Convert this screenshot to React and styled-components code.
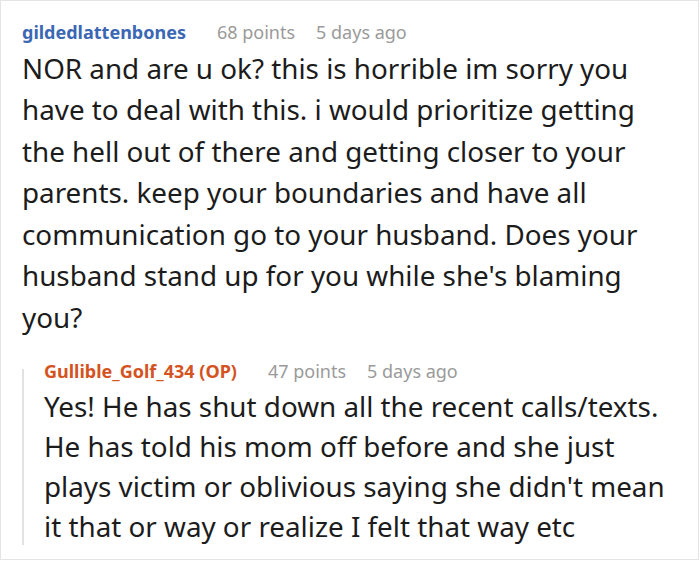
import React from 'react';
import styled, { createGlobalStyle } from 'styled-components';

const GlobalStyle = createGlobalStyle`
	html, body {
		margin: 0;
		padding: 0;
		background: #fff;
	}
`;

//Outer frame around the thread
const Card = styled.div`
	box-sizing: border-box;
	width: 699px;
	height: 560px;
	border: 1.5px solid #e4e4e4;
	border-top-width: 1px;
	padding: 17px 32px 0 21px;
	overflow: hidden;
	font-family: 'Noto Sans', 'Open Sans', sans-serif;
	background: #fff;
`;

const Comment = styled.div`
	display: flex;
	flex-direction: column;
`;

const Meta = styled.div`
	display: flex;
	align-items: baseline;
	font-size: 18px;
	line-height: 28px;
	white-space: nowrap;
`;

const Author = styled.span`
	font-weight: 700;
	color: ${(p) => (p.$op ? '#d4531f' : '#3b67b4')};
	margin-right: 31px;
`;

const Points = styled.span`
	color: #9a9a9a;
	margin-right: 21px;
`;

const When = styled.span`
	color: #9a9a9a;
`;

const Body = styled.p`
	margin: ${(p) => p.$m || '0'};
	font-size: 27.8px;
	line-height: ${(p) => p.$lh || '41.5px'};
	color: #1c1c1c;
`;

//Nested reply, thread line starts halfway down the header
const Reply = styled.div`
	position: relative;
	margin-top: 19px;
	padding-left: 22px;
	display: flex;
	flex-direction: column;

	&::before {
		content: '';
		position: absolute;
		left: 0;
		top: 12px;
		height: 176px;
		width: 2px;
		background: #e2e2e2;
	}
`;

const App = () => {
	return (
		<>
			<GlobalStyle />
			<Card>
				<Comment>
					<Meta>
						<Author>gildedlattenbones</Author>
						<Points>68 points</Points>
						<When>5 days ago</When>
					</Meta>
					<Body $m="1.5px 0 0">
						NOR and are u ok? this is horrible im sorry you have to deal with this. i would prioritize getting the hell out of there and getting closer to your parents. keep your boundaries and have all communication go to your husband. Does your husband stand up for you while she's blaming you?
					</Body>
				</Comment>
				<Reply>
					<Meta>
						<Author $op>Gullible_Golf_434 (OP)</Author>
						<Points>47 points</Points>
						<When>5 days ago</When>
					</Meta>
					<Body $m="1px 0 0" $lh="40px">
						Yes! He has shut down all the recent calls/texts. He has told his mom off before and she just plays victim or oblivious saying she didn't mean it that or way or realize I felt that way etc
					</Body>
				</Reply>
			</Card>
		</>
	);
};

export default App;
